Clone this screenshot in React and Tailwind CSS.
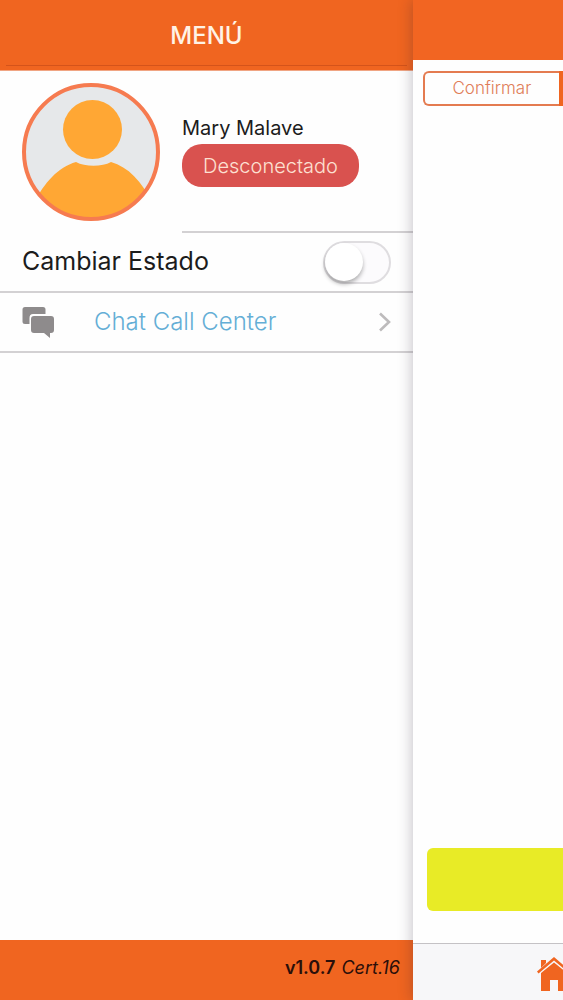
import React, { useState } from 'react';

const AvatarIcon = () => (
  <svg viewBox="0 0 138 138" className="block h-[138px] w-[138px]" role="img" aria-label="Mary Malave">
    <defs>
      <clipPath id="avatar-clip">
        <circle cx="69" cy="69" r="66" />
      </clipPath>
    </defs>
    <circle cx="69" cy="69" r="66" fill="#e6e8ea" />
    <g clipPath="url(#avatar-clip)" fill="#ffa734">
      <circle cx="70.500" cy="46.500" r="29.500" />
      <path d="M12 120C22 100 36 84 54 79C63 84 80 84 89 79C106 84 120 98 130 120V138H12Z" />
    </g>
    <circle cx="69" cy="69" r="67" fill="none" stroke="#f67b50" strokeWidth="4" />
  </svg>
);

const ChatIcon = () => (
  <svg viewBox="0 0 32 31" className="h-[31px] w-8" fill="#8e8b8c" aria-hidden="true">
    <path d="M3 0H21Q23.500 0 23.500 2.500V7H11Q7.500 7 7.500 11V17H3Q.5 17 .5 14.500V2.500Q.5 0 3 0Z" />
    <path d="M12 9H29Q32 9 32 12V23Q32 26 29 26H28V31L22 26H12Q9 26 9 23V12Q9 9 12 9Z" />
  </svg>
);

const ChevronIcon = () => (
  <svg viewBox="0 0 12 20" className="h-5 w-3" fill="none" stroke="#bdbbbc" strokeWidth="2.6" aria-hidden="true">
    <path d="M1 1.500L10 10L1 18.500" />
  </svg>
);

const HomeIcon = () => (
  <svg viewBox="0 0 34 34" className="h-[34px] w-[34px]" fill="#f06520" aria-hidden="true">
    <path d="M4 3H9V6L4 11Z" />
    <path d="M0 14.500L17 0L34 14.500L32.500 16.500L17 3.500L1.500 16.500Z" />
    <path d="M4 16L17 5.500L30 16V34H21V23H13V34H4Z" />
  </svg>
);

const Drawer = () => {
  const [active, setActive] = useState(false);

  return (
    <aside className="flex min-w-0 flex-1 flex-col bg-[#fefefe]">
      <header className="flex h-[71px] flex-col border-b border-[#f0a583] bg-[#f06520]">
        <h1 className="flex flex-1 items-center justify-center pt-[6px] text-2xl font-medium text-[#fff3e6]">MENÚ</h1>
        <div className="mx-[6px] mb-1 h-px bg-[#d4531a]" />
      </header>

      <section className="flex h-[162px] pl-[22px]">
        <div className="w-40 shrink-0 pt-3">
          <AvatarIcon />
        </div>
        <div className="min-w-0 flex-1 border-b-2 border-[#d3d1d3] pt-[45px]">
          <p className="text-xl leading-6 text-[#1c1c1c]">Mary Malave</p>
          <span className="mt-1 inline-flex h-[43px] w-[177px] items-center justify-center rounded-[20px] bg-[#d9524f] text-xl font-light text-[#fde0d2]">
            Desconectado
          </span>
        </div>
      </section>

      <div className="flex h-[60px] items-center justify-between border-b-2 border-[#d3d1d3] pr-[22px] pl-[22px]">
        <label htmlFor="status" className="text-[25px] text-[#1c1c1c]">
          Cambiar Estado
        </label>
        <span className="relative flex h-[43px] w-[68px]">
          <input
            id="status"
            type="checkbox"
            role="switch"
            checked={active}
            onChange={(e) => setActive(e.target.checked)}
            className="peer h-full w-full appearance-none rounded-full border-2 border-[#dfdde0] bg-[#fcfbfd] checked:bg-[#f06520]"
          />
          <span className="pointer-events-none absolute top-[2px] left-[2px] h-[38px] w-[38px] rounded-full bg-white shadow-[0_3px_4px_rgba(0,0,0,0.3)] peer-checked:left-7" />
        </span>
      </div>

      <a href="#chat" className="flex h-[60px] items-center border-b-2 border-[#d3d1d3] pr-[22px] pl-[22px]">
        <ChatIcon />
        <span className="ml-10 flex-1 text-2xl font-light text-[#64aed6]">Chat Call Center</span>
        <ChevronIcon />
      </a>

      <footer className="mt-auto flex h-[60px] items-center justify-end bg-[#f06520] pr-[13px] pb-1 text-lg text-[#2a0f0a]">
        <strong className="mr-[6px] font-semibold">v1.0.7</strong>
        <em>Cert.16</em>
      </footer>
    </aside>
  );
};

const OrdersPage = () => (
  <main className="relative w-[150px] shrink-0 overflow-hidden">
    {/* the page keeps its full width while it is pushed aside by the drawer */}
    <div className="flex min-h-screen w-screen flex-col bg-[#fefefe]">
      <div className="h-[60px] bg-[#f26522]" />
      <div className="mx-[10px] mt-[11px] flex h-[35px]">
        <button
          type="button"
          className="w-1/4 rounded-l-md border-2 border-r-0 border-[#e47b50] text-[17px] font-light text-[#e07d58]"
        >
          Confirmar
        </button>
        <button type="button" aria-label="Confirmados" className="flex-1 rounded-r-md bg-[#f06520]" />
      </div>
      <button
        type="button"
        aria-label="Continuar"
        className="mx-[14px] mt-auto mb-8 h-[63px] rounded-md bg-[#e8eb26]"
      />
      <nav className="flex h-[57px] border-t border-[#c4c2c5] bg-[#f7f7f9]">
        <a href="#inicio" aria-label="Inicio" className="flex w-1/2 items-center justify-center pt-1">
          <HomeIcon />
        </a>
      </nav>
    </div>
  </main>
);

const App = () => (
  <div className="flex min-h-screen overflow-hidden font-['Inter',sans-serif]">
    <Drawer />
    <div className="relative flex shadow-[0_0_14px_rgba(40,30,50,0.3)]">
      <OrdersPage />
    </div>
  </div>
);

export default App;
